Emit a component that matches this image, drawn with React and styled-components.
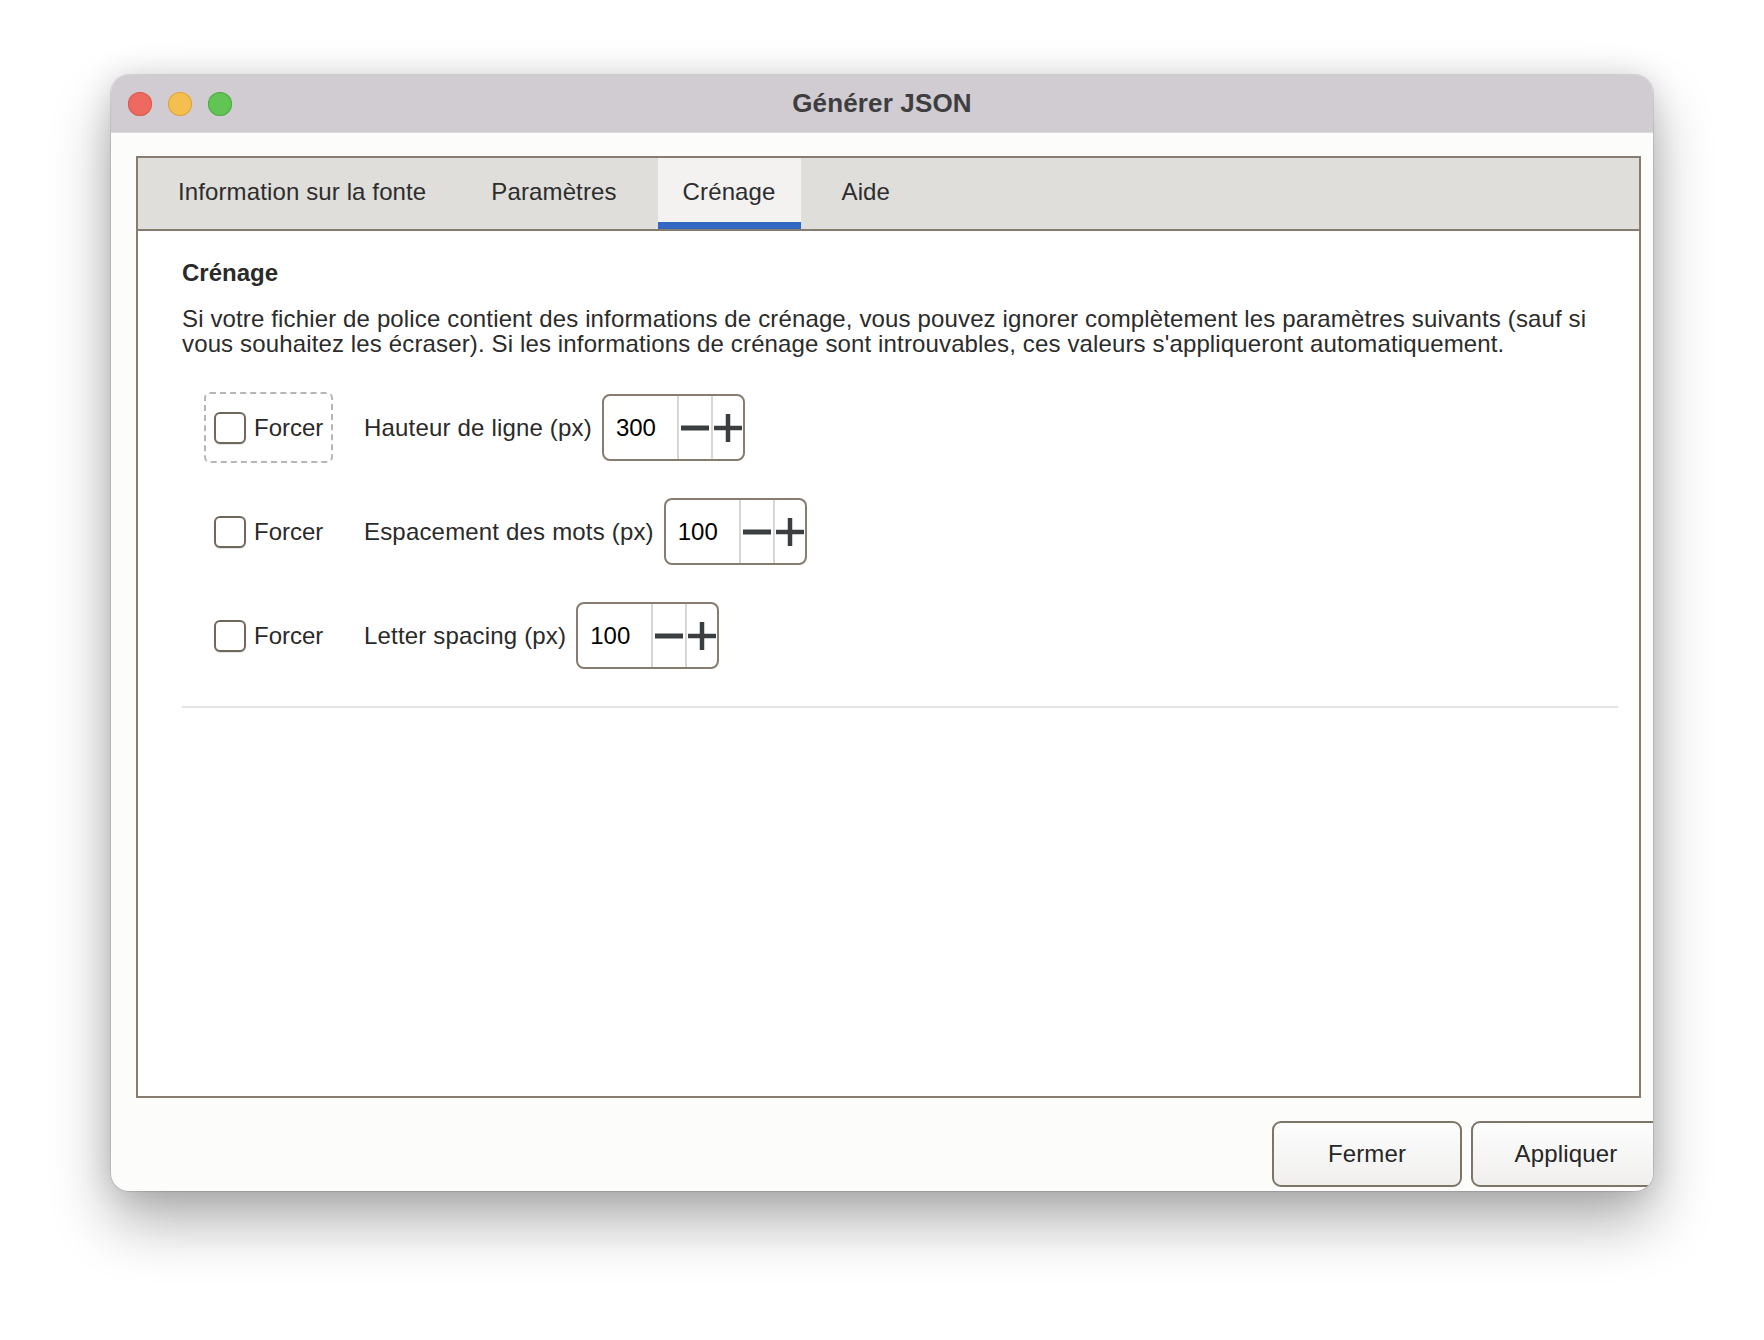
import React from "react";
import styled, { createGlobalStyle } from "styled-components";

const Global = createGlobalStyle`
  html, body { margin: 0; padding: 0; background: #ffffff; }
  body { font-family: "Liberation Sans", Arial, Helvetica, sans-serif; }
`;

const Page = styled.div`
  box-sizing: border-box;
  width: 1764px;
  height: 1340px;
  padding: 75px 0 0 111px;
  background: #ffffff;
`;

const Window = styled.div`
  width: 1542px;
  height: 1116px;
  border-radius: 18px;
  overflow: hidden;
  background: #fcfcfb;
  display: flex;
  flex-direction: column;
  box-shadow: 0 30px 60px rgba(0, 0, 0, 0.32), 0 0 30px rgba(0, 0, 0, 0.12),
    0 0 0 1px rgba(0, 0, 0, 0.1);
`;

const TitleBar = styled.div`
  flex: none;
  box-sizing: border-box;
  height: 58px;
  background: #d0ccd2;
  border-bottom: 1px solid #dedbde;
  display: grid;
  grid-template-columns: 1fr auto 1fr;
  align-items: center;
  padding: 0 17px;
`;

const Lights = styled.div`
  display: flex;
  gap: 16px;
`;

const Light = styled.span`
  width: 24px;
  height: 24px;
  border-radius: 50%;
  background: ${(p) => p.$c};
  box-shadow: inset 0 0 0 1px ${(p) => p.$b};
`;

const Title = styled.div`
  font-size: 26px;
  font-weight: bold;
  color: #3e3d40;
  letter-spacing: 0.15px;
`;

const Body = styled.div`
  flex: 1;
  display: flex;
  flex-direction: column;
  padding: 23px 12px 0 25px;
  min-height: 0;
`;

const Frame = styled.div`
  flex: none;
  box-sizing: border-box;
  height: 942px;
  border: 2px solid #867c6f;
  background: #ffffff;
  display: flex;
  flex-direction: column;
`;

const TabBar = styled.div`
  flex: none;
  box-sizing: border-box;
  height: 73px;
  border-bottom: 2px solid #867c6f;
  background: #dfdedb;
  display: flex;
  gap: 17px;
  padding-left: 16px;
`;

const Tab = styled.div`
  display: flex;
  align-items: center;
  padding: 0 ${(p) => (p.$active ? "25px" : "24px")} 4px;
  font-size: 24px;
  letter-spacing: 0.12px;
  color: #2d2d2d;
  background: ${(p) => (p.$active ? "#f3f2f1" : "transparent")};
  box-shadow: ${(p) => (p.$active ? "inset 0 -7px 0 #3268c4" : "none")};
`;

const Content = styled.div`
  flex: 1;
  display: flex;
  flex-direction: column;
  padding: 27px 21px 0 44px;
`;

const Heading = styled.div`
  font-size: 24px;
  line-height: 30px;
  font-weight: bold;
  color: #2a2a2a;
`;

const Para = styled.p`
  margin: 18px 0 0;
  font-size: 24px;
  line-height: 25px;
  letter-spacing: 0.14px;
  color: #2b2b2b;
  white-space: nowrap;
`;

const Rows = styled.div`
  margin-top: 36px;
  padding-left: 22px;
  display: flex;
  flex-direction: column;
  gap: 33px;
`;

const Row = styled.div`
  display: flex;
  align-items: center;
  height: 71px;
`;

const ForceBox = styled.label`
  box-sizing: border-box;
  width: 129px;
  height: 71px;
  padding-left: 8px;
  display: flex;
  align-items: center;
  gap: 8px;
  border: 2px dashed ${(p) => (p.$focus ? "#b6b6b6" : "transparent")};
  border-radius: 6px;
`;

const Checkbox = styled.span`
  box-sizing: border-box;
  width: 32px;
  height: 32px;
  border: 2px solid #70675c;
  border-radius: 6px;
  background: #ffffff;
  box-shadow: 0 1px 1px rgba(0, 0, 0, 0.12);
`;

const ForceText = styled.span`
  font-size: 24px;
  color: #2a2a2a;
`;

const FieldLabel = styled.span`
  margin: 0 10px 0 31px;
  font-size: 24px;
  letter-spacing: 0.18px;
  color: #2a2a2a;
`;

const Spin = styled.div`
  box-sizing: border-box;
  display: flex;
  height: 67px;
  border: 2px solid #867c6f;
  border-radius: 8px;
  background: #ffffff;
  overflow: hidden;
`;

const SpinValue = styled.div`
  box-sizing: border-box;
  width: 75px;
  padding-left: 12px;
  display: flex;
  align-items: center;
  font-size: 24px;
  color: #000000;
  border-right: 2px solid #d9d6d1;
`;

const SpinBtn = styled.div`
  box-sizing: border-box;
  width: 32px;
  display: flex;
  align-items: center;
  justify-content: center;
  border-left: ${(p) => (p.$divider ? "2px solid #d9d6d1" : "none")};
`;

const Separator = styled.div`
  margin-top: 35px;
  height: 2px;
  background: #e4e4e4;
`;

const Footer = styled.div`
  display: flex;
  justify-content: flex-end;
  gap: 9px;
  padding-top: 23px;
  margin-right: -20px;
`;

const Button = styled.div`
  box-sizing: border-box;
  width: 190px;
  height: 66px;
  border: 2px solid #7e7468;
  border-radius: 9px;
  background: linear-gradient(#fdfdfd, #f0efee);
  display: flex;
  align-items: center;
  justify-content: center;
  font-size: 24px;
  letter-spacing: 0.15px;
  color: #262626;
`;

const Minus = () => (
  <svg width="28" height="28" viewBox="0 0 28 28">
    <rect x="0" y="11.5" width="28" height="5" fill="#3b3e40" />
  </svg>
);

const Plus = () => (
  <svg width="28" height="28" viewBox="0 0 28 28">
    <rect x="0" y="11.75" width="28" height="4.5" fill="#3b3e40" />
    <rect x="11.75" y="0" width="4.5" height="28" fill="#3b3e40" />
  </svg>
);

const fields = [
  { label: "Hauteur de ligne (px)", value: "300", focus: true },
  { label: "Espacement des mots (px)", value: "100" },
  { label: "Letter spacing (px)", value: "100" },
];

export default function App() {
  return (
    <Page>
      <Global />
      <Window>
        <TitleBar>
          <Lights>
            <Light $c="#ee6a5f" $b="#d65a50" />
            <Light $c="#f5bf4f" $b="#d9a441" />
            <Light $c="#61c454" $b="#52a846" />
          </Lights>
          <Title>Générer JSON</Title>
          <span />
        </TitleBar>
        <Body>
          <Frame>
            <TabBar>
              <Tab>Information sur la fonte</Tab>
              <Tab>Paramètres</Tab>
              <Tab $active>Crénage</Tab>
              <Tab>Aide</Tab>
            </TabBar>
            <Content>
              <Heading>Crénage</Heading>
              <Para>
                Si votre fichier de police contient des informations de crénage, vous pouvez ignorer complètement les paramètres suivants (sauf si
                <br />
                vous souhaitez les écraser). Si les informations de crénage sont introuvables, ces valeurs s'appliqueront automatiquement.
              </Para>
              <Rows>
                {fields.map((f) => (
                  <Row key={f.label}>
                    <ForceBox $focus={f.focus}>
                      <Checkbox />
                      <ForceText>Forcer</ForceText>
                    </ForceBox>
                    <FieldLabel>{f.label}</FieldLabel>
                    <Spin>
                      <SpinValue>{f.value}</SpinValue>
                      <SpinBtn>
                        <Minus />
                      </SpinBtn>
                      <SpinBtn $divider>
                        <Plus />
                      </SpinBtn>
                    </Spin>
                  </Row>
                ))}
              </Rows>
              <Separator />
            </Content>
          </Frame>
          <Footer>
            <Button>Fermer</Button>
            <Button>Appliquer</Button>
          </Footer>
        </Body>
      </Window>
    </Page>
  );
}
